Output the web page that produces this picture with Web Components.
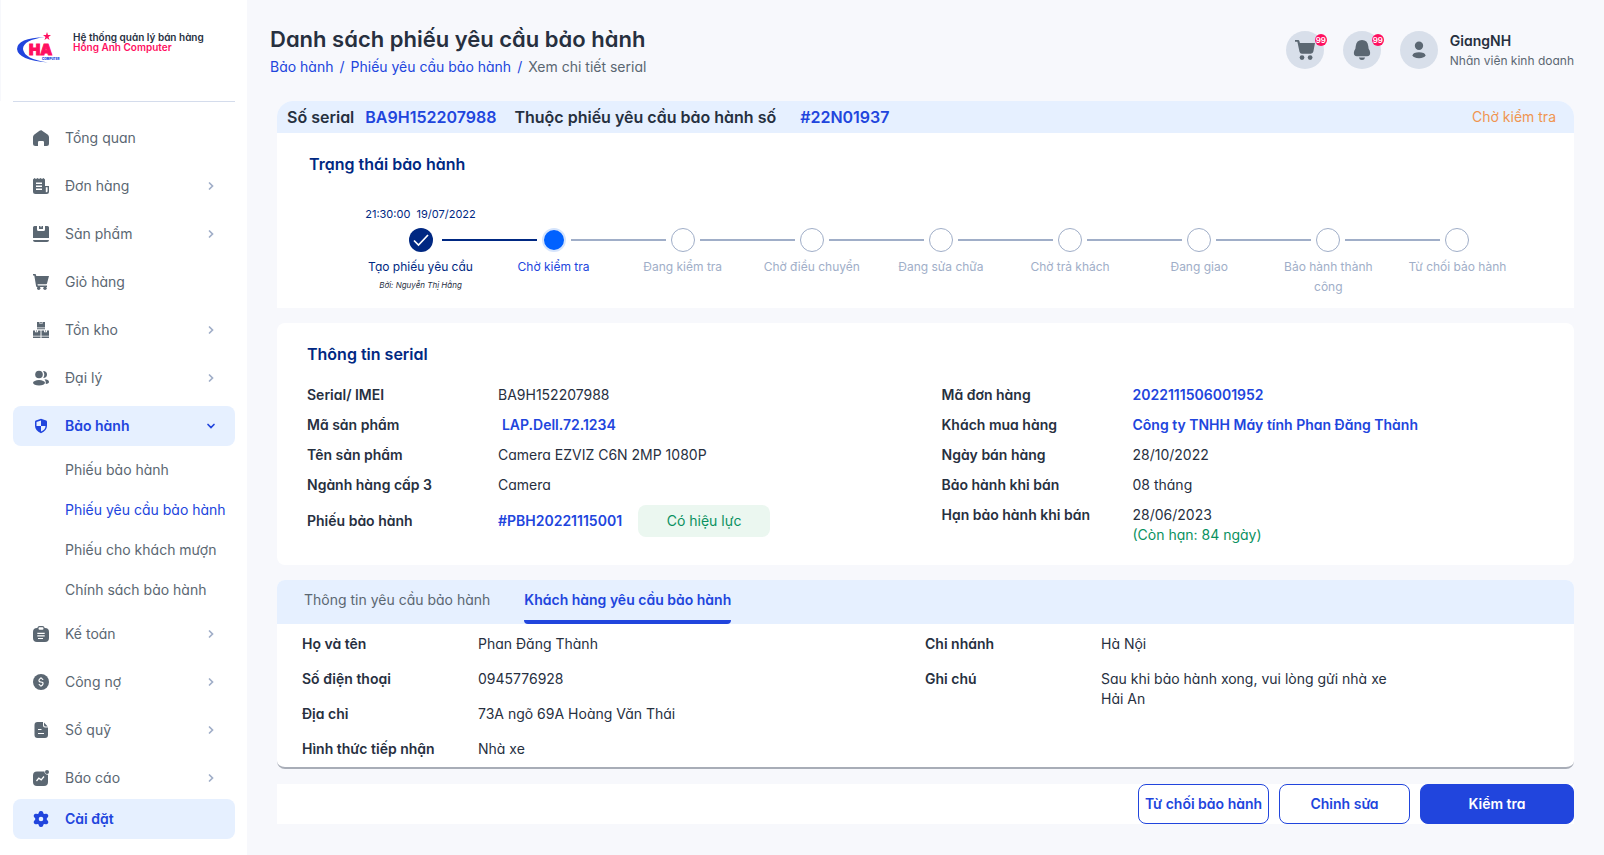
<!DOCTYPE html>
<html lang="vi">
<head>
<meta charset="utf-8">
<meta name="viewport" content="width=device-width, initial-scale=1">
<title>Danh sách phiếu yêu cầu bảo hành</title>
<style>
  :root {
    --blue: #2145dd; --navy: #002882; --ink: #27303f; --gray: #5b6772; --mist: #a0aec8;
    --sky: #e6f0ff; --page: #f7f8fc; --green: #0a9160; --pink: #ff0f5f; --disc: #d8dfea;
  }
  body {
    margin: 0; background: var(--page); color: var(--ink);
    font: 400 14px/20px Inter, "Noto Sans", sans-serif;
    font-feature-settings: "cv11";
  }
</style>
</head>
<body>
<app-shell>
  <side-bar slot="side">
    <nav-item icon="home">Tổng quan</nav-item>
    <nav-item icon="order" more>Đơn hàng</nav-item>
    <nav-item icon="box" more>Sản phẩm</nav-item>
    <nav-item icon="cart">Giỏ hàng</nav-item>
    <nav-item icon="stock" more>Tồn kho</nav-item>
    <nav-item icon="users" more>Đại lý</nav-item>
    <nav-item icon="shield" open>Bảo hành</nav-item>
    <nav-group>
      <sub-item>Phiếu bảo hành</sub-item>
      <sub-item current>Phiếu yêu cầu bảo hành</sub-item>
      <sub-item>Phiếu cho khách mượn</sub-item>
      <sub-item>Chính sách bảo hành</sub-item>
    </nav-group>
    <nav-item icon="clip" more>Kế toán</nav-item>
    <nav-item icon="coin" more>Công nợ</nav-item>
    <nav-item icon="file" more>Sổ quỹ</nav-item>
    <nav-item icon="report" more>Báo cáo</nav-item>
    <nav-item slot="foot" icon="gear" open>Cài đặt</nav-item>
  </side-bar>

  <page-header></page-header>

  <page-stack>
    <status-card>
      <step-item state="done" time="21:30:00  19/07/2022" by="Bởi: Nguyễn Thị Hằng">Tạo phiếu yêu cầu</step-item>
      <step-item state="now">Chờ kiểm tra</step-item>
      <step-item>Đang kiểm tra</step-item>
      <step-item>Chờ điều chuyển</step-item>
      <step-item>Đang sửa chữa</step-item>
      <step-item>Chờ trả khách</step-item>
      <step-item>Đang giao</step-item>
      <step-item>Bảo hành thành công</step-item>
      <step-item last>Từ chối bảo hành</step-item>
    </status-card>

    <serial-card>
      <info-row label="Serial/ IMEI">BA9H152207988</info-row>
      <info-row label="Mã sản phẩm">&nbsp;<text-link>LAP.Dell.72.1234</text-link></info-row>
      <info-row label="Tên sản phẩm">Camera EZVIZ C6N 2MP 1080P</info-row>
      <info-row label="Ngành hàng cấp 3">Camera</info-row>
      <info-row label="Phiếu bảo hành" middle><text-link>#PBH20221115001</text-link><state-pill>Có hiệu lực</state-pill></info-row>
      <info-row slot="right" label="Mã đơn hàng"><text-link>2022111506001952</text-link></info-row>
      <info-row slot="right" label="Khách mua hàng"><text-link>Công ty TNHH Máy tính Phan Đăng Thành</text-link></info-row>
      <info-row slot="right" label="Ngày bán hàng">28/10/2022</info-row>
      <info-row slot="right" label="Bảo hành khi bán">08 tháng</info-row>
      <info-row slot="right" label="Hạn bảo hành khi bán" note="(Còn hạn: 84 ngày)">28/06/2023</info-row>
    </serial-card>

    <customer-card>
      <info-row label="Họ và tên">Phan Đăng Thành</info-row>
      <info-row label="Số điện thoại">0945776928</info-row>
      <info-row label="Địa chỉ">73A ngõ 69A Hoàng Văn Thái</info-row>
      <info-row label="Hình thức tiếp nhận">Nhà xe</info-row>
      <info-row slot="right" label="Chi nhánh">Hà Nội</info-row>
      <info-row slot="right" label="Ghi chú">Sau khi bảo hành xong, vui lòng gửi nhà xe Hải An</info-row>
    </customer-card>

    <action-bar></action-bar>
  </page-stack>
</app-shell>

<script>
const define = (name, html) => customElements.define(name, class extends HTMLElement {
  constructor() { super(); this.attachShadow({ mode: "open" }); }
  connectedCallback() {
    if (this.shadowRoot.firstChild) return;
    const t = document.createElement("template");
    t.innerHTML = typeof html === "function" ? html(this) : html;
    this.shadowRoot.append(t.content.cloneNode(true));
  }
});

/* 16-unit icon set */
const ICONS = {
  home: `<path d="M8 0 14.6 4.4Q16 5.4 16 7v6.5A2.5 2.5 0 0 1 13.500 16H11v-3.800Q11 11 9.800 11H6.200Q5 11 5 12.200V16H2.500A2.500 2.500 0 0 1 0 13.500V7Q0 5.400 1.400 4.400L6.500.7Q8-.4 9.500.7z"/>`,
  order: `<path fill-rule="evenodd" d="M0 1.500 1.500 0 3 1 4.500 0 6 1 7.500 0 9 1 10.500 0 12 1.500V8h4v5.500a2.500 2.500 0 0 1-2.500 2.500h-11A2.500 2.500 0 0 1 0 13.500zM3 4.500v1.400h6V4.500zm0 3v1.400h6V7.500zm0 3v1.400h6v-1.400zm9.800-1.200v5q1.800.3 1.800-1.300V9.300z"/>`,
  box: `<path d="M0 1.500Q0 0 1.500 0H4v3.500Q4 5 5.500 5h5Q12 5 12 3.500V0h2.500Q16 0 16 1.500V12H0zM0 14h16q0 2-2 2H2q-2 0-2-2z"/><path d="M6 0h1.500v1.200h1V0H10v3H6z"/>`,
  cart: `<path d="M0 0h2.600l.7 2H16l-2 7.500a1 1 0 0 1-1 .8H4.500l.3 1.200H14V13H4q-.7 0-.9-.8L1.300 1.400H0z"/><circle cx="5.700" cy="14.300" r="1.700"/><circle cx="12" cy="14.300" r="1.700"/>`,
  trolley: `<path d="M0 0h2.500q.8 0 1 .8l.4 1.600H16l-1.300 6.800q-.3 1.700-2 1.700H5.500Q4 10.900 3.600 9.400L1.900 1.300H0z"/><circle cx="5.600" cy="14" r="1.900"/><circle cx="12.100" cy="14" r="1.900"/>`,
  stock: `<path d="M4 0h2.500v1.800h3V0H12v5.500H4zM4 6.200h8v1H4zM7.200 0h1.600v1.200H7.200zM0 8.500h2v1.800h3V8.500h2.500v5.200H0zM8.500 8.500H11v1.800h3V8.500h2v5.200H8.500zM0 14.600h7.500V16H0zM8.500 14.600H16V16H8.500zM2.900 8.500h1.200v1H2.900zM11.900 8.500h1.200v1h-1.200z"/>`,
  users: `<circle cx="6" cy="4.500" r="3.800"/><ellipse cx="6" cy="12.800" rx="6" ry="2.700"/><path d="M10 1q4 .3 4 3.500T10.200 8Q12.500 4.500 10 1zM11.500 9.300q4.300.2 4.500 2.500 0 2-3.200 2.100.3-3-1.300-4.600z"/>`,
  shield: `<path fill-rule="evenodd" d="M8 .8 13.200 2.500Q14 2.900 14 4v3.800q0 4.700-6 7.400Q2 12.500 2 7.800V4q0-1.100.8-1.500zM8 2.500 3.500 4v4H8zM8 8v5.500Q12.500 11.500 12.500 8z"/>`,
  clip: `<path fill-rule="evenodd" d="M4 2h.300Q4.700 0 6.500 0h3q1.800 0 2.200 2h.3q4 0 4 4v6q0 4-4 4H4q-4 0-4-4V6q0-4 4-4zM6.500 1.200Q5.500 1.200 5.500 2.500t1 1.300h3q1 0 1-1.300t-1-1.300zM4.300 6.700V8h7.400V6.700zm0 2.600v1.200h7.400V9.300zM5 12v1.100h5V12z"/>`,
  coin: `<circle cx="8" cy="8" r="8"/><path d="M10 6Q9.700 4.500 8 4.500T6 6.200 8 8t2 1.800-2 1.700T6 10M8 3.200v1.500M8 11.300v1.500" fill="none" stroke="#fff" stroke-width="1.200"/>`,
  file: `<path d="M4.500 0H10v3.500Q10 5.500 12 5.500h3V13q0 3-3 3H4.500q-3 0-3-3V3q0-3 3-3z"/><path d="M11 .5 14.700 4.600H12.500Q11 4.600 11 3z"/><path d="M5 7.500h3.500M5 11.500h6" stroke="#fff" stroke-width="1.200"/>`,
  report: `<path d="M4 1.500h7.500q-.3 3 3.500 3.200V12q0 4-4 4H4q-4 0-4-4V5.500q0-4 4-4z"/><circle cx="14" cy="2" r="2"/><path d="m3.500 11 2.300-2.800 2.400 1.600L11 6.500" fill="none" stroke="#fff" stroke-width="1.300"/>`,
  gear: `<path fill-rule="evenodd" d="M5.900 1.300Q6.300 0 8 0t2.100 1.300l.3 1.300 1 .5 1.400-.4q1.400-.3 2.200 1.100t-.2 2.500l-1 .9v1.600l1 .9q1 1.100.2 2.500t-2.200 1.100l-1.400-.4-1 .5-.3 1.300Q9.700 16 8 16t-2.100-1.300l-.3-1.300-1-.5-1.400.4q-1.400.3-2.200-1.100t.2-2.500l1-.9V7.200l-1-.9Q.2 5.200 1 3.800t2.200-1.100l1.400.4 1-.5zM8 5.700a2.300 2.300 0 1 0 0 4.600 2.300 2.300 0 0 0 0-4.600z"/>`,
  bell: `<path d="M8 0q4.500 0 5 4.800l.3 2.200q1 1.200 1.200 3 .2 3-2.500 3H4q-2.700 0-2.500-3 .2-1.800 1.200-3L3 4.800Q3.500 0 8 0zM5.500 14h5Q10 16 8 16t-2.500-2z"/>`,
  person: `<circle cx="8" cy="4.200" r="3.700"/><ellipse cx="8" cy="12.600" rx="5.700" ry="2.700"/>`,
  right: `<path d="m6.500 5 3 3-3 3" fill="none" stroke="currentColor" stroke-width="1.700" stroke-linecap="round"/>`,
  down: `<path d="M5 6.500l3 3 3-3" fill="none" stroke="currentColor" stroke-width="1.700" stroke-linecap="round"/>`
};
define("ui-icon", el => `<style>:host{display:block;flex:none;width:16px;height:16px}svg{display:block;width:100%;height:100%}</style>
  <svg viewBox="0 0 16 16" fill="currentColor" aria-hidden="true">${ICONS[el.getAttribute("name")]}</svg>`);

define("app-shell", `<style>
  :host{display:grid;grid-template-columns:247px minmax(0,1fr);min-height:100vh}
  main{padding:23px 30px 31px 23px}
</style><slot name="side"></slot><main><slot></slot></main>`);

define("side-bar", `<style>
  :host{display:block;background:#fff}
  header{display:flex;gap:12px;height:101px;box-sizing:border-box;padding:32px 12px 0 16px;border-left:1px solid var(--page)}
  svg{flex:none;width:44px;height:32px}
  p{margin:0;font-size:10px;line-height:10px;font-weight:600}
  b{display:block;color:var(--pink);font-weight:600}
  nav{display:flex;flex-direction:column;gap:8px;margin:0 12px 0 13px;padding-top:16px;border-top:1px solid #d4dcec}
  footer{margin:1px 12px 16px 13px}
</style>
<header>
  <svg viewBox="0 0 44 32" role="img" aria-label="HA Computer">
    <path d="M28 5Q0 6 0 17q1 11 31 13.500Q7 27 6 17 6 8 28 5z" fill="#2145dd"/>
    <path d="m30 0 1 3h3l-2.500 2 1 3L30 6.200 27.500 8l1-3L26 3h3z" fill="#ff0f5f"/>
    <text x="12" y="23" font-size="15" font-weight="900" fill="#ff0f5f" stroke="#ff0f5f" stroke-width="1">HA</text>
    <text x="25" y="28" font-size="3" font-weight="900" fill="#2145dd">COMPUTER</text>
  </svg>
  <p>Hệ thống quản lý bán hàng<b>Hồng Anh Computer</b></p>
</header>
<nav><slot></slot></nav><footer><slot name="foot"></slot></footer>`);

define("nav-item", el => {
  const open = el.hasAttribute("open");
  const end = open && el.slot !== "foot" ? "down" : el.hasAttribute("more") ? "right" : "";
  return `<style>
  :host{display:block}
  a{display:flex;align-items:center;gap:16px;height:40px;padding:0 16px 0 20px;border-radius:8px;color:var(--gray);text-decoration:none}
  a.open{background:var(--sky);color:var(--blue);font-weight:600}
  span{flex:1}
  .end{color:var(--mist)} .open .end{color:var(--blue)}
</style><a href="#" class="${open ? "open" : ""}"><ui-icon name="${el.getAttribute("icon")}"></ui-icon><span><slot></slot></span>${end ? `<ui-icon class="end" name="${end}"></ui-icon>` : ""}</a>`;
});

define("nav-group", `<style>:host{display:block;margin:-4px 0}</style><slot></slot>`);
define("sub-item", `<style>
  :host{display:block;color:var(--gray)} :host([current]){color:var(--blue)}
  a{display:block;padding:10px 0 10px 52px;color:inherit;text-decoration:none;white-space:nowrap}
</style><a href="#"><slot></slot></a>`);

define("page-header", `<style>
  :host{display:flex;justify-content:space-between;margin-bottom:24px}
  h1{margin:0 0 2px;font-size:22px;line-height:32px;font-weight:600}
  nav{display:flex;gap:6px;color:var(--gray)} nav a,nav i{color:var(--blue);text-decoration:none;font-style:normal}
  .tools{display:flex;gap:19px;align-items:flex-start;padding-top:8px}
  button{display:grid;place-items:center;position:relative;width:38px;height:38px;padding:0;border:0;border-radius:50%;background:var(--disc);color:var(--gray);font:inherit;font-feature-settings:inherit}
  button ui-icon{width:20px;height:20px}
  .user ui-icon{width:18px;height:18px}
  .n{position:absolute;top:3px;right:-3px;width:12px;height:12px;border-radius:50%;background:var(--pink);color:#fff;font-size:8px;line-height:12px;font-weight:600;text-align:center}
  .who{display:flex;gap:12px}
  p{margin:0;font-size:12px;color:var(--gray)} b{display:block;font-size:14px;font-weight:600;color:var(--ink)}
</style>
<div><h1>Danh sách phiếu yêu cầu bảo hành</h1>
<nav aria-label="Breadcrumb"><a href="#">Bảo hành</a><i>/</i><a href="#">Phiếu yêu cầu bảo hành</a><i>/</i><span>Xem chi tiết serial</span></nav></div>
<div class="tools">
  <button aria-label="Giỏ hàng"><ui-icon name="trolley"></ui-icon><span class="n">99</span></button>
  <button aria-label="Thông báo"><ui-icon name="bell"></ui-icon><span class="n">99</span></button>
  <div class="who"><button class="user" aria-label="Tài khoản"><ui-icon name="person"></ui-icon></button>
  <p><b>GiangNH</b>Nhân viên kinh doanh</p></div>
</div>`);

define("page-stack", `<style>:host{display:flex;flex-direction:column;gap:15px;margin-left:7px}</style><slot></slot>`);

define("status-card", `<style>
  :host{display:block;background:#fff;border-radius:16px 16px 0 0;overflow:hidden}
  header{display:flex;align-items:center;height:32px;padding:0 18px 0 10px;background:var(--sky);font-size:16px;font-weight:600}
  a{color:var(--blue);text-decoration:none;margin:0 18px 0 11px} a+span+a{margin-left:24px}
  em{margin-left:auto;font:400 14px/20px Inter,sans-serif;color:#f09550}
  h2{margin:21px 0 30px 32px;font-size:16px;line-height:20px;font-weight:600;color:var(--navy)}
  .steps{display:grid;grid-template-columns:137px repeat(8,minmax(0,1fr));padding:0 52px 11px 75px}
</style>
<header><span>Số serial</span><a href="#">BA9H152207988</a><span>Thuộc phiếu yêu cầu bảo hành số</span><a href="#">#22N01937</a><em>Chờ kiểm tra</em></header>
<h2>Trạng thái bảo hành</h2><div class="steps"><slot></slot></div>`);

define("step-item", el => `<style>
  :host{display:flex;flex-direction:column;align-items:center;font-size:12px;text-align:center;color:var(--mist);--before:var(--mist);--after:var(--mist);font-feature-settings:normal}
  time{height:20px;margin-bottom:4px;font-size:11px;white-space:pre}
  .track{display:flex;align-items:center;align-self:stretch;gap:5px;margin-bottom:5px}
  .track i{flex:1;height:2px;background:var(--before)} .track i:last-child{background:var(--after)}
  .dot{box-sizing:border-box;flex:none;width:24px;height:24px;border:1px solid var(--mist);border-radius:50%}
  span{padding:0 12px}
  small{margin-top:2px;font-size:8px;line-height:12px;font-style:italic;color:var(--ink)}
  :host([state=done]){color:var(--navy);--before:transparent;--after:var(--navy);font-feature-settings:"cv11"}
  :host([state=done]) .track{gap:9px}
  :host([state=done]) .dot{border:0;background:var(--navy)}
  :host([state=done]) span{white-space:nowrap}
  :host([state=now]){color:var(--blue);--before:var(--navy)}
  :host([state=now]) .dot{border:2px solid #d5e4fc;background:#0061ff}
  :host([last]){--after:transparent}
  svg{display:block}
</style><time>${el.getAttribute("time") || ""}</time>
<div class="track"><i></i><div class="dot">${el.getAttribute("state") === "done" ? `<svg width="24" height="24" viewBox="0 0 24 24"><path d="m5 12.500 4.500 4.500L19 7" fill="none" stroke="#fff" stroke-width="1.700"/></svg>` : ""}</div><i></i></div>
<span><slot></slot></span>${el.hasAttribute("by") ? `<small>${el.getAttribute("by")}</small>` : ""}`);

define("text-link", `<style>a{color:var(--blue);font-weight:600;text-decoration:none}</style><a href="#"><slot></slot></a>`);
define("state-pill", `<style>:host{flex:none;width:132px;border-radius:8px;background:#ebf7f0;color:var(--green);line-height:32px;text-align:center}</style><slot></slot>`);

define("info-row", el => `<style>
  :host{display:block} dl{display:flex;margin:0}
  :host([middle]) dl{align-items:center}
  dt{flex:none;width:var(--label);font-weight:600} dd{margin:0;max-width:300px}
  :host([middle]) dd{display:flex;align-items:center;gap:16px}
  span{display:block;color:var(--green)}
</style><dl><dt>${el.getAttribute("label")}</dt><dd><slot></slot>${el.hasAttribute("note") ? `<span>${el.getAttribute("note")}</span>` : ""}</dd></dl>`);

define("serial-card", `<style>
  :host{display:block;padding:21px 30px 20px;border-radius:8px;background:#fff;--label:191px}
  h2{margin:0 0 21px;font-size:16px;line-height:20px;font-weight:600;color:var(--navy)}
  .cols{display:grid;grid-template-columns:1fr 1fr;gap:32px}
  .cols div{display:flex;flex-direction:column;gap:10px}
</style><h2>Thông tin serial</h2><div class="cols"><div><slot></slot></div><div><slot name="right"></slot></div></div>`);

define("customer-card", `<style>
  :host{display:block;border-bottom:2px solid #a8adb7;border-radius:8px;background:#fff;--label:176px}
  .tabs{display:flex;gap:34px;padding:0 27px;background:var(--sky);border-radius:8px 8px 0 0}
  button{position:relative;height:44px;padding:0 0 4px;border:0;background:none;font:inherit;font-feature-settings:inherit;color:var(--gray)}
  button[aria-selected=true]{color:var(--blue);font-weight:600}
  button[aria-selected=true]::after{content:"";position:absolute;left:0;right:0;bottom:0;height:4px;border-radius:0 0 4px 4px;background:var(--blue)}
  .cols{display:grid;grid-template-columns:1fr 1fr;gap:24px;padding:10px 50px 8px 25px}
  .cols div{display:flex;flex-direction:column;gap:15px}
</style>
<div class="tabs" role="tablist"><button role="tab" aria-selected="false">Thông tin yêu cầu bảo hành</button><button role="tab" aria-selected="true">Khách hàng yêu cầu bảo hành</button></div>
<div class="cols" role="tabpanel"><div><slot></slot></div><div><slot name="right"></slot></div></div>`);

define("action-bar", `<style>
  :host{display:flex;justify-content:flex-end;gap:10px;background:#fff}
  button{width:131px;height:40px;padding:0;border:1px solid var(--blue);border-radius:8px;background:#fff;color:var(--blue);font:inherit;font-feature-settings:inherit;font-weight:600;white-space:nowrap}
  .main{width:154px;background:var(--blue);color:#fff}
</style><button>Từ chối bảo hành</button><button>Chỉnh sửa</button><button class="main">Kiểm tra</button>`);
</script>
</body>
</html>
